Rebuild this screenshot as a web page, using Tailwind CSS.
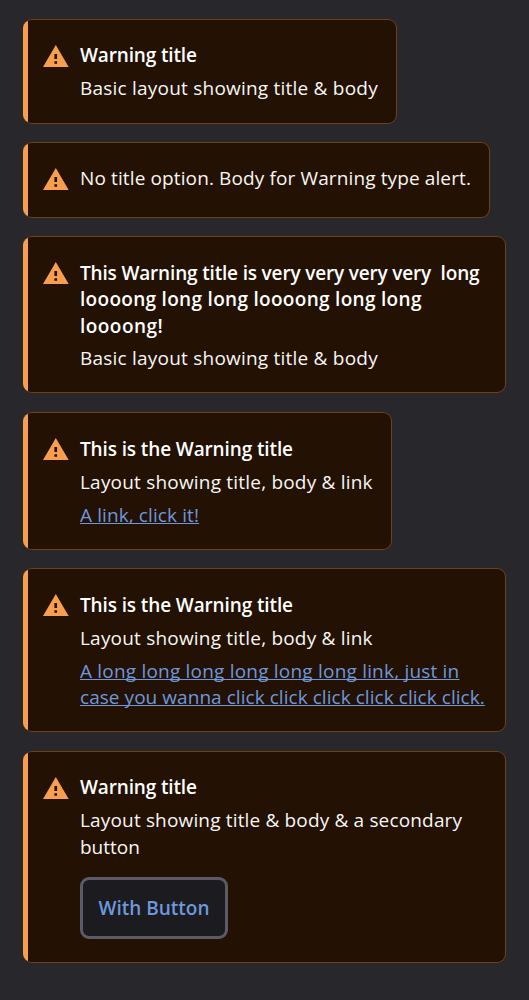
<!DOCTYPE html>
<html lang="en">
<head>
<meta charset="utf-8">
<title>Warning alerts</title>
<script src="https://cdn.jsdelivr.net/npm/@tailwindcss/browser@4"></script>
</head>
<body class="bg-[#27272c] font-['Open_Sans','Noto_Sans',sans-serif] text-[19px] leading-[26.4px] text-[#f8f6f4]">
<svg class="hidden"><symbol id="warn" viewBox="0 0 26 22"><path fill="#f79f4f" d="M12.8 0 25.7 22H0Z"/><path fill="#231103" d="M11.4 9h2.7v5h-2.7zM11.4 16.2h2.7v2.6h-2.7z"/></symbol></svg>
<main class="flex flex-col items-start h-[1000px] pt-[19px] pl-[23px] whitespace-nowrap">
  <section class="flex w-[374px] h-[105px] mb-[18px] overflow-hidden rounded-[9px] border border-l-0 border-[#6e411b] bg-[#231103]">
    <div class="w-[5px] shrink-0 bg-[#f79f4f]"></div>
    <svg class="w-[26px] h-[22px] ml-[15px] mt-[25px] shrink-0"><use href="#warn"/></svg>
    <div class="ml-[11px] pt-[22.4px]">
      <h2 class="font-semibold text-white"><span class="tracking-[-0.15px]">Warning title</span></h2>
      <p class="mt-[6.6px]"><span class="tracking-[0.22px]">Basic layout showing title &amp; body</span></p>
    </div>
  </section>
  <section class="flex w-[467px] h-[76px] mb-[18px] overflow-hidden rounded-[9px] border border-l-0 border-[#6e411b] bg-[#231103]">
    <div class="w-[5px] shrink-0 bg-[#f79f4f]"></div>
    <svg class="w-[26px] h-[22px] ml-[15px] mt-[25px] shrink-0"><use href="#warn"/></svg>
    <div class="ml-[11px] pt-[22.4px]">
      <p><span class="tracking-[0.12px]">No title option. Body for Warning type alert.</span></p>
    </div>
  </section>
  <section class="flex w-[483px] h-[157px] mb-[19px] overflow-hidden rounded-[9px] border border-l-0 border-[#6e411b] bg-[#231103]">
    <div class="w-[5px] shrink-0 bg-[#f79f4f]"></div>
    <svg class="w-[26px] h-[22px] ml-[15px] mt-[25px] shrink-0"><use href="#warn"/></svg>
    <div class="ml-[11px] pt-[22.8px]">
      <h2 class="font-semibold text-white"><span class="whitespace-pre tracking-[-0.17px]">This Warning title is very very very very  long</span><br><span class="tracking-[0.3px]">loooong long long loooong long long</span><br><span class="tracking-[0.45px]">loooong!</span></h2>
      <p class="mt-[6px]"><span class="tracking-[0.22px]">Basic layout showing title &amp; body</span></p>
    </div>
  </section>
  <section class="flex w-[369px] h-[138px] mb-[18px] overflow-hidden rounded-[9px] border border-l-0 border-[#6e411b] bg-[#231103]">
    <div class="w-[5px] shrink-0 bg-[#f79f4f]"></div>
    <svg class="w-[26px] h-[22px] ml-[15px] mt-[25px] shrink-0"><use href="#warn"/></svg>
    <div class="ml-[11px] pt-[22.8px]">
      <h2 class="font-semibold text-white"><span class="tracking-[-0.12px]">This is the Warning title</span></h2>
      <p class="mt-[6.6px]"><span class="tracking-[0.2px]">Layout showing title, body &amp; link</span></p>
      <a href="#" class="block mt-[6.6px] text-[#6e98dc] underline [text-decoration-skip-ink:none]"><span class="tracking-[0.1px]">A link, click it!</span></a>
    </div>
  </section>
  <section class="flex w-[483px] h-[164px] mb-[19px] overflow-hidden rounded-[9px] border border-l-0 border-[#6e411b] bg-[#231103]">
    <div class="w-[5px] shrink-0 bg-[#f79f4f]"></div>
    <svg class="w-[26px] h-[22px] ml-[15px] mt-[25px] shrink-0"><use href="#warn"/></svg>
    <div class="ml-[11px] pt-[22.8px]">
      <h2 class="font-semibold text-white"><span class="tracking-[-0.12px]">This is the Warning title</span></h2>
      <p class="mt-[6.6px]"><span class="tracking-[0.2px]">Layout showing title, body &amp; link</span></p>
      <a href="#" class="block mt-[6.6px] text-[#6e98dc] underline [text-decoration-skip-ink:none]"><span class="tracking-[0.2px]">A long long long long long long link, just in</span><br><span class="tracking-[0.05px]">case you wanna click click click click click click.</span></a>
    </div>
  </section>
  <section class="flex w-[483px] h-[212px] overflow-hidden rounded-[9px] border border-l-0 border-[#6e411b] bg-[#231103]">
    <div class="w-[5px] shrink-0 bg-[#f79f4f]"></div>
    <svg class="w-[26px] h-[22px] ml-[15px] mt-[24.5px] shrink-0"><use href="#warn"/></svg>
    <div class="ml-[11px] pt-[22.2px]">
      <h2 class="font-semibold text-white"><span class="tracking-[-0.15px]">Warning title</span></h2>
      <p class="mt-[6.6px]"><span class="tracking-[0.16px]">Layout showing title &amp; body &amp; a secondary</span><br><span>button</span></p>
      <button class="mt-[17.2px] flex h-[62px] w-[148px] items-center justify-center rounded-[9px] border-3 border-[#5b5a66] bg-[#1b1b20] font-semibold text-[#6e98dc]"><span>With Button</span></button>
    </div>
  </section>
</main>
</body>
</html>
